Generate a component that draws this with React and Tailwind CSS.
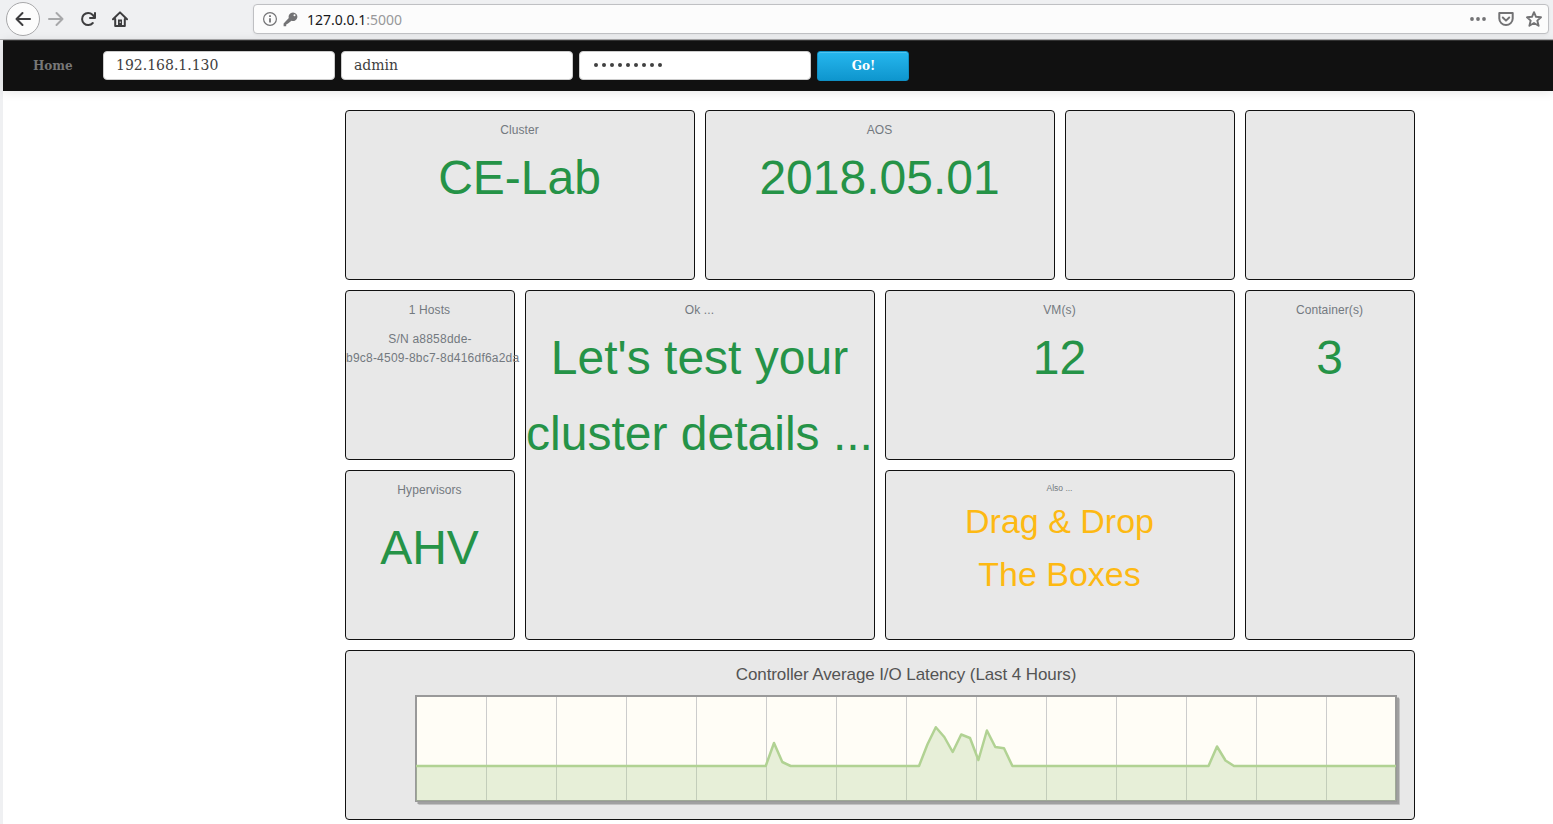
const card = "rounded-[4px] border border-[#111] bg-[#e8e8e8] text-center min-w-0";

function Label({ children }) {
  return <p className="-ml-px mt-[10px] text-[12px] leading-[19px] tracking-[0.1px] text-[#73797f]">{children}</p>;
}

function Big({ children }) {
  return <p className="-ml-px whitespace-nowrap text-[48px] leading-[76px] text-[#259347]">{children}</p>;
}

function Browser() {
  return (
    <div className="flex h-10 items-start border-b border-[#a9a9ab] bg-[#eff0f2] pl-[6px] pr-1">
      <div className="mt-[2px] flex h-[34px] w-[34px] items-center justify-center rounded-full border border-[#a8a8aa] bg-[#fcfcfc]">
        <svg width="16" height="16" viewBox="0 0 16 16" fill="none" stroke="#3d3d3f" strokeWidth="2" strokeLinecap="round" strokeLinejoin="round"><path d="M15 8H1.5M7.500 2L1.500 8l6 6" /></svg>
      </div>
      <svg className="ml-2 mt-[11px]" width="16" height="16" viewBox="0 0 16 16" fill="none" stroke="#a7a8aa" strokeWidth="2" strokeLinecap="round" strokeLinejoin="round"><path d="M1 8h13.500M8.500 2l6 6-6 6" /></svg>
      <svg className="ml-4 mt-[11px]" width="16" height="16" viewBox="0 0 16 16" fill="none" stroke="#3d3d3f" strokeWidth="2" strokeLinecap="round"><path d="M12.800 12A6.100 6.100 0 1 1 12.500 3.700L14 5.500" /><path d="M15 2V7H10" strokeLinejoin="round" /></svg>
      <svg className="ml-4 mt-[11px]" width="16" height="16" viewBox="0 0 16 16" fill="none" stroke="#3d3d3f" strokeWidth="2" strokeLinecap="round" strokeLinejoin="round"><path d="M1 8.200L8 1.400l7 6.800M3.200 8V15h9.600V8" /><path d="M6 15V8.500h4V15z" fill="#3d3d3f" stroke="none" /><path d="M8.200 10.500v1.500" stroke="#eff0f2" strokeWidth="1" strokeLinecap="butt" /></svg>
      <div className="ml-[125px] mt-[4px] flex h-[30px] flex-1 items-center rounded-[4px] border border-[#bfc0c3] bg-[#fcfcfc] pl-[9px] pr-[6px] shadow-[0_1px_3px_rgba(0,0,0,0.06)]">
        <svg width="14" height="14" viewBox="0 0 14 14" fill="none" stroke="#737375"><circle cx="7" cy="7" r="6.400" strokeWidth="1.200" /><path d="M7 6.200V10.500M7 3.200V5" strokeWidth="1.800" /></svg>
        <svg className="ml-[6px]" width="15" height="15" viewBox="0 0 15 15"><path d="M10 0.500a4.300 4.300 0 0 0-4.200 5.600L0.600 11.400V14.200H3.200V12.500L5 11.400L8.500 8.800A4.300 4.300 0 1 0 10 .5z" fill="#737375" /><circle cx="11.500" cy="3.300" r="1" fill="#fcfcfc" /></svg>
        <span className="ml-[9px] mt-[2px] flex-1 font-['Noto_Sans',sans-serif] text-[14px] leading-[18px] text-[#18181a]">127.0.0.1<span className="text-[#98989a]">:5000</span></span>
        <svg width="16" height="16" viewBox="0 0 16 16" fill="#737375"><circle cx="2" cy="8" r="1.900" /><circle cx="8" cy="8" r="1.900" /><circle cx="14" cy="8" r="1.900" /></svg>
        <svg className="ml-3" width="16" height="16" viewBox="0 0 16 16" fill="none" stroke="#737375" strokeWidth="2" strokeLinecap="round" strokeLinejoin="round"><path d="M1.300 2h13.400v5.500a6.700 6.500 0 0 1-13.400 0z" /><path d="M4.800 6.500L8 9.600l3.200-3.100" /></svg>
        <svg className="ml-3" width="16" height="16" viewBox="0 0 16 16" fill="none" stroke="#737375" strokeWidth="1.900" strokeLinejoin="round"><path d="M8 1.200l2 4.600 5 .5-3.700 3.300 1.300 5.200L8 12l-4.600 2.800 1.300-5.200L1 6.300l5-.5z" /></svg>
      </div>
    </div>
  );
}

function NavBar() {
  const input = "h-[29px] w-[232px] rounded-[4px] border border-[#ccc] bg-white pb-[2px] pl-3 text-[14px] text-[#404040] outline-none";
  return (
    <div className="flex h-[51px] items-start border-t border-[#333] bg-[#111] pl-[30px] pt-[10px] font-['DejaVu_Serif',serif] shadow-[0_1px_10px_rgba(0,0,0,0.1)]">
      <span className="w-[70px] pt-[6px] text-[12px] font-bold leading-[19px] text-[#777]">Home</span>
      <div className="flex gap-[6px]">
        <input className={input} defaultValue="192.168.1.130" />
        <input className={input} defaultValue="admin" />
        <div className="flex h-[29px] w-[232px] items-center gap-1 rounded-[4px] border border-[#ccc] bg-white pb-[2px] pl-[14px]">
          {Array.from({ length: 9 }, (_, i) => <span key={i} className="h-1 w-1 rounded-full bg-[#404040]" />)}
        </div>
        <button className="h-[30px] w-[92px] rounded-[3px] border border-[#0f8fc4] bg-linear-to-b from-[#25b7ee] to-[#0e96ce] pl-px text-[12px] font-bold leading-[28px] text-white shadow-[inset_0_1px_0_rgba(255,255,255,0.2)]">Go!</button>
      </div>
    </div>
  );
}

const line = "M416 766H765.700L774 743L782.300 762L790.700 766H919L927.400 744.500L935.800 727.200L944.300 737L952.700 752L961.200 734.500L970 738L978.400 760L986.900 730.500L995.300 747L1004 748.200L1012.400 766H1208.500L1217 746.500L1225.500 760.500L1234 766H1396";

function Chart() {
  return (
    <svg className="ml-[69px] block" width="986" height="112" viewBox="415 695 986 112">
      <path d="M1397.500 697.500V802.500H417.500" fill="none" stroke="#a0a0a0" strokeWidth="3" />
      <path d="M1399.500 698.500V804.500H418.500" fill="none" stroke="#c2c2c2" strokeWidth="1" />
      <rect x="416" y="696" width="980" height="105" fill="#fffdf6" />
      {Array.from({ length: 13 }, (_, i) => <path key={i} d={`M${486.5 + i * 70} 696V801`} stroke="#ccc" />)}
      <rect x="416" y="696" width="980" height="105" fill="none" stroke="#999" strokeWidth="2" />
      <path d={line + "V801H416Z"} fill="#b1d293" fillOpacity=".3" />
      <path d={line} fill="none" stroke="#b1d293" strokeWidth="2.500" strokeLinejoin="round" />
    </svg>
  );
}

export default function App() {
  return (
    <div className="h-[824px] w-[1553px] overflow-hidden bg-white font-['Liberation_Sans',Arial,sans-serif]">
      <Browser />
      <div className="h-[784px] border-l-[3px] border-[#eff0f2]">
        <NavBar />
        <main className="ml-[342px] mt-[19px] grid w-[1070px] grid-cols-[repeat(6,170px)] grid-rows-[repeat(4,170px)] gap-[10px]">
          <section className={`${card} col-span-2`}><Label>Cluster</Label><Big>CE-Lab</Big></section>
          <section className={`${card} col-span-2`}><Label>AOS</Label><Big>2018.05.01</Big></section>
          <section className={card} />
          <section className={card} />
          <section className={card}>
            <Label>1 Hosts</Label>
            <p className="mt-[10px] whitespace-nowrap text-[12px] leading-[19px] tracking-[0.22px] text-[#73797f]">S/N a8858dde-<br />b9c8-4509-8bc7-8d416df6a2da</p>
          </section>
          <section className={`${card} col-span-2 row-span-2`}><Label>Ok ...</Label><Big>Let's test your<br />cluster details ...</Big></section>
          <section className={`${card} col-span-2`}><Label>VM(s)</Label><Big>12</Big></section>
          <section className={`${card} row-span-2`}><Label>Container(s)</Label><Big>3</Big></section>
          <section className={card}><Label>Hypervisors</Label><div className="pt-[10px]"><Big>AHV</Big></div></section>
          <section className={`${card} col-span-2`}>
            <p className="-ml-px mt-[10px] text-[8.5px] leading-[14px] text-[#73797f]">Also ...</p>
            <p className="-ml-px text-[34px] leading-[53px] text-[#fdb913]">Drag &amp; Drop<br />The Boxes</p>
          </section>
          <section className={`${card} col-span-6 text-left`}>
            <h2 className="mb-[9px] mt-[12px] pl-[52px] text-center text-[17px] leading-[23px] tracking-[-0.09px] text-[#545454]">Controller Average I/O Latency (Last 4 Hours)</h2>
            <Chart />
          </section>
        </main>
      </div>
    </div>
  );
}
